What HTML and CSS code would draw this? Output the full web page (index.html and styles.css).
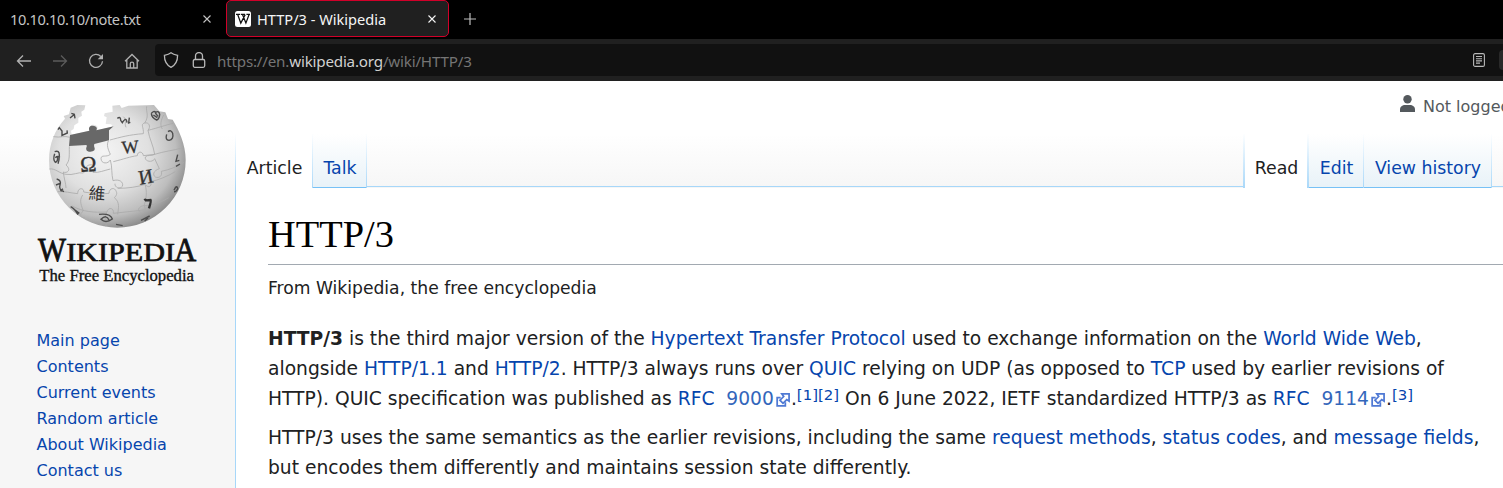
FILE: index.html
```html
<!DOCTYPE html>
<html lang="en">
<head>
<meta charset="utf-8">
<title>HTTP/3 - Wikipedia</title>
<link rel="stylesheet" href="styles.css">
</head>
<body>
<header class="browser">
  <div class="tabstrip">
    <div class="tab"><span class="tab-title narrow">10.10.10.10/note.txt</span>
      <svg class="close" viewBox="0 0 8 8"><path d="M.5.5l7 7M7.5.5l-7 7"/></svg></div>
    <div class="tab tab-active">
      <svg class="favicon" viewBox="0 0 16 16"><rect width="16" height="16" rx="2.5" fill="#fff"/><path d="M1 3.400h4.200M6 3.400h4M11.400 3.400H15M2.700 3.500l3.100 8.600L10.200 3.600M7.500 3.500l3.400 8.600 3.200-8.600" fill="none" stroke="#111" stroke-width="1.250"/></svg>
      <span class="tab-title">HTTP/3 - Wikipedia</span>
      <svg class="close" viewBox="0 0 8 8"><path d="M.5.5l7 7M7.5.5l-7 7"/></svg></div>
    <svg class="plus" viewBox="0 0 12 12"><path d="M6 0v12M0 6h12"/></svg>
  </div>
  <div class="toolbar">
    <div class="nav-icons">
      <svg viewBox="0 0 16 16"><path d="M15 8H1.700M7 2.500L1.500 8 7 13.500"/></svg>
      <svg class="dim" viewBox="0 0 16 16"><path d="M1 8h13.300M9 2.500L14.500 8 9 13.500"/></svg>
      <svg viewBox="0 0 16 16"><path d="M12.800 3.500A6.500 6.500 0 1 0 14.500 8.300"/><path class="solid" d="M15 1v5.300H9.700z"/></svg>
      <svg viewBox="0 0 16 16"><path d="M1 8.300L8 1.500l7 6.800M2.800 7v8h10.400V7M6.300 15v-4.200a1.700 1.700 0 0 1 3.400 0V15"/></svg>
    </div>
    <div class="urlbar">
      <svg class="shield" viewBox="0 0 16 16"><path d="M8 .8c2 1.600 4.300 2.100 6.600 2.500 0 5.500-2 9.800-6.600 12-4.600-2.200-6.600-6.500-6.600-12C3.700 2.900 6 2.400 8 .8z"/></svg>
      <svg class="lock" viewBox="0 0 16 16"><rect x="2.300" y="7.500" width="11.400" height="7.800" rx="1.500"/><path d="M4.500 7.500V4a3.500 3.500 0 0 1 7 0v3.500"/></svg>
      <span class="url">https://en.<b>wikipedia.org</b>/wiki/HTTP/3</span>
      <svg class="reader" viewBox="0 0 12 14"><rect x=".6" y=".6" width="10.800" height="12.800" rx="1.500"/><path d="M3 3.500h6M3 5.700h6M3 7.900h6M3 10.100h4"/></svg>
      <span class="zoom-chip"></span>
    </div>
  </div>
</header>
<div class="page">
  <aside class="sidebar">
    <svg class="logo" viewBox="0 0 540 600">
      <defs>
        <radialGradient id="ball" cx="40%" cy="38%" r="66%"><stop offset="0" stop-color="#f4f4f4"/><stop offset=".5" stop-color="#e0e0e0"/><stop offset=".8" stop-color="#bdbdbd"/><stop offset="1" stop-color="#848484"/></radialGradient>
      </defs>
      <path fill="url(#ball)" d="M122 38l20-8 24 1-3 13-9 6 2 12-11 7 0 14-12 8-2 11-8 5 2 12 55-12c-4-14 4-20 14-17 9 2 11 8 7 15l50-9-8-8-16-1 3-20-8-4 2-8 24-5-1-18 22-2 6 9 20-7 53-1 24-1 16 19 18 3 8 20 14 2C446 104 467 148 467 195a205 203 0 0 1-410 0c0-48 18-92 48-124l-4-8 16-5z"/>
      <path fill="#686868" d="M120 120l58-13c-4-13 5-17 14-14 9 2 10 7 7 13l52-12-14 12v30l-44 11c-3 9 4 12 0 19-5 6-22 6-24-2-2-7 4-10 0-14l-52 3z"/>
      <g class="seams">
        <path d="M70 125c22 4 32-4 50 2M118 154c-1 25 3 42-10 56 18 16 2 26-8 21 2 20 8 36 8 48M58 222c18-3 28 13 50 16 22 4 36-8 52-4 12-10 4-20 17-24 18-4 19 12 12 22 18 2 34-6 52-10M236 136c-8 14-1 28 5 42-12 10-27 0-28 12 0 18 22 17 28 5 6 20 3 42 8 62 18-6 33 4 28 17-7 10-24 3-22-8M240 135c30-8 58-16 100-19 2-20-10-28 4-32 14-3 19 11 10 22 32-8 50-15 75-21M354 106c4 25 16 45 20 72-8 6-22 0-28 8-3 14 22 18 28 5l14 30c-18 6-21 19-12 25 12 5 22-4 18-17 22-4 48-14 68-27M374 178c28-9 58-12 82-19M250 200c32-8 50-15 72-18 0-14 17-14 18 0l34-4M83 290c20-2 38 4 60 6 0-20 20-18 18-5 20 3 50 8 76 4 0-16 18-20 22-5 4 8-3 15-6 18 18 14 12 32 10 50M158 300c-12 18-3 33 2 48-14 10-8 22 4 20M263 280c30 0 60-4 82-12 10 13 22 6 17-8 24-5 50-16 74-30M345 268c7 22 4 44-3 64-18 2-22 18-8 20 14 0 13-14 8-20 28 0 54-12 74-24M126 333c34 18 65 20 105 18 3-15 22-14 19 4l92-10M230 352c-10 20 3 30-3 42M280 65c12 10 2 20 8 32M350 34c-3 16 9 28-6 50M401 60c-8 15-12 30-4 42"/>
      </g>
      <g class="glyphs">
        <text x="150" y="230" font-size="66" transform="rotate(-3 176 205)" stroke="#333">Ω</text>
        <text x="275" y="174" font-size="54" transform="rotate(-5 304 155)" stroke="#333">W</text>
        <text x="325" y="266" font-size="61" transform="rotate(-10 347 245)" stroke="#333">И</text>
        <text class="cjk" x="176" y="314" font-size="50" transform="rotate(4 200 295)">維</text>
        <path stroke-width="7" d="M343 316q4-4 5 0l14-1q2 2-5 25"/>
        <path d="M74 170q14-5 14 10t-4 26M76 188q6-6 14-1M74 176q-6 18 2 26 9-3 6-18M80 252q15 4 10 18t12 20M78 270l12-5M91 288l8-7M84 104l4-6 8 10 0 13 16-7-1-8M124 55l9 3 2 12M120 69l12-10M262 70q10-7 10 6l5 7q12-20 14 0M298 68l-2 16 5-2M364 55q7-9 13-3 10-6 12 6-1 14-9 17-15-7-16-20M370 60l12 8M376 54l8 10M410 118q-5 17 7 18 15-3 11-21-5-12-14-5M443 179l-5 20 10-3M438 214l12-7M432 286q8-19 11-5-4 10-11 9M122 335q13 7 22 24M148 355l-12-9M207 358q34-4 40 14-20 14-34 1 16-16 24 2M333 376l26-13M344 378l10-9M258 388l20 4"/>
      </g>
      <g class="wordmark">
        <text x="24" y="498" font-size="102" stroke-width="2.500" textLength="84" lengthAdjust="spacingAndGlyphs">W</text>
        <text x="109" y="498" font-size="76" stroke-width="2" textLength="326" lengthAdjust="spacingAndGlyphs">IKIPEDI</text>
        <text x="433" y="498" font-size="102" stroke-width="2.500" textLength="66" lengthAdjust="spacingAndGlyphs">A</text>
        <text x="28" y="557" font-size="52" textLength="464" lengthAdjust="spacingAndGlyphs">The Free Encyclopedia</text>
      </g>
    </svg>
    <nav class="links"><a>Main page</a><a>Contents</a><a>Current events</a><a>Random article</a><a>About Wikipedia</a><a>Contact us</a></nav>
  </aside>
  <div class="main">
    <div class="personal"><svg viewBox="0 0 15 18"><circle cx="7.500" cy="4.300" r="4.200"/><path d="M0 17v-2.500C0 11.500 2.500 10 5 10h5c2.500 0 5 1.500 5 4.500V17z"/></svg><span>Not logged</span></div>
    <div class="page-tabs">
      <span class="ptab selected article">Article</span><span class="ptab talk">Talk</span>
      <span class="spacer"></span>
      <span class="ptab selected read">Read</span><span class="ptab edit">Edit</span><span class="ptab history">View history</span><span class="tail"></span>
    </div>
    <main class="content">
      <h1>HTTP/3</h1>
      <div class="siteline">From Wikipedia, the free encyclopedia</div>
      <p><b>HTTP/3</b> is the third major version of the <a>Hypertext Transfer Protocol</a> used to exchange information on the <a>World Wide Web</a>,<br>
      alongside <a>HTTP/1.1</a> and <a>HTTP/2</a>. HTTP/3 always runs over <a>QUIC</a> relying on UDP (as opposed to <a>TCP</a> used by earlier revisions of<br>
      HTTP). QUIC specification was published as <a>RFC</a>&nbsp; <a class="ext">9000<svg viewBox="0 0 12 12"><path d="M4 4H1v7h7V8"/><path d="M5 .8h6.200V7L9.200 5.600 6 8.800 3.400 6.200l3.200-3.200z"/></svg></a>.<sup>[1][2]</sup> On 6 June 2022, IETF standardized HTTP/3 as <a>RFC</a>&nbsp; <a class="ext">9114<svg viewBox="0 0 12 12"><path d="M4 4H1v7h7V8"/><path d="M5 .8h6.200V7L9.200 5.600 6 8.800 3.400 6.200l3.200-3.200z"/></svg></a>.<sup>[3]</sup></p>
      <p>HTTP/3 uses the same semantics as the earlier revisions, including the same <a>request methods</a>, <a>status codes</a>, and <a>message fields</a>,<br>
      but encodes them differently and maintains session state differently.</p>
    </main>
  </div>
</div>
</body>
</html>
```
FILE: styles.css
```css
* { box-sizing: border-box; }
html, body { margin: 0; height: 488px; overflow: hidden; }
body { width: 1503px; font-family: "DejaVu Sans", sans-serif; background: #f6f6f6; color: #202122; }
a { color: #0645ad; }
svg { display: block; flex: none; }

.browser { height: 81px; font-family: "Noto Sans", sans-serif; background: #202020; }
.tabstrip { display: flex; height: 39px; background: #000; color: #c4c4c4; font-size: 14.6px; }
.tab { display: flex; align-items: center; width: 226px; height: 37px; padding: 0 15px 0 10px; }
.tab-title { flex: 1; white-space: nowrap; }
.narrow { letter-spacing: -0.35px; }
.tab-active { width: 223px; padding: 0 12px 0 8px; border: 1px solid #d10029; border-radius: 5px; background: #202020; color: #f5f5f5; }
.favicon { width: 16px; height: 16px; margin-right: 6px; }
.close { width: 8px; height: 8px; fill: none; stroke: currentColor; stroke-width: 1.1; }
.plus { width: 12px; height: 12px; margin: 13px 0 0 15px; fill: none; stroke: #bdbdbd; stroke-width: 1.2; }
.toolbar { display: flex; height: 42px; padding: 5px 0; }
.nav-icons { display: flex; align-items: center; gap: 20px; width: 155px; padding: 1px 0 0 16px; }
.nav-icons svg { width: 16px; height: 16px; fill: none; stroke: #b0b0b0; stroke-width: 1.3; }
.nav-icons .dim { stroke: #5b5b5b; }
.nav-icons .solid { fill: #b0b0b0; stroke: none; }
.urlbar { display: flex; flex: 1; align-items: center; height: 32px; padding-left: 8px; border-radius: 4px 0 0 4px; background: #111; }
.urlbar svg { fill: none; stroke: #b8b8b8; stroke-width: 1.3; }
.shield, .lock { width: 16px; height: 16px; }
.lock { margin: 0 10px 0 12px; }
.url { flex: 1; padding-top: 1px; font-size: 15.2px; letter-spacing: -0.2px; color: #757575; white-space: nowrap; }
.url b { font-weight: 400; color: #d0d0d0; }
.reader { width: 12px; height: 14px; }
.urlbar .reader { stroke-width: 1.1; }
.zoom-chip { width: 4px; height: 20px; margin-left: 14px; border-radius: 4px 0 0 4px; background: #292929; }

.page { display: flex; height: 407px; background: linear-gradient(#fff 53px, #f6f6f6 107px); }
.sidebar { width: 235px; flex: none; padding-top: 14px; }
.logo { width: 180px; height: 200px; margin-left: 30px; }
.seams { fill: none; stroke: #aaa; stroke-width: 2.4; }
.glyphs { fill: #333; font-family: "Liberation Serif", serif; }
.glyphs path { fill: none; stroke: #4c4c4c; stroke-width: 4.2; }
.glyphs path[stroke-width] { stroke: #333; stroke-width: 7; }
.glyphs .cjk { font-family: "Noto Sans CJK TC", sans-serif; }
.wordmark { font-family: "Liberation Serif", serif; fill: #111; stroke: #111; stroke-width: 1; }
.links { display: flex; flex-direction: column; padding: 33px 0 0 36.5px; font-size: 16px; line-height: 26px; }

.main { display: flex; flex: 1; flex-direction: column; min-width: 0; }
.personal { display: flex; flex: none; height: 53px; padding: 14px 0 0 1165px; font-size: 16px; line-height: 23px; color: #54595d; white-space: nowrap; }
.personal svg { width: 15px; height: 18px; margin-right: 8px; fill: #54595d; }
.page-tabs { display: flex; flex: none; height: 54px; font-size: 17.33px; line-height: 20px; white-space: nowrap; }
.ptab { flex: none; height: 54px; padding: 24px 0 0 1px; color: #0645ad; text-align: center; border-right: 1px solid; border-image: linear-gradient(#fff, #a7d7f9) 1; border-bottom-width: 0; background: linear-gradient(#fff, #e8f2f8); box-shadow: inset 0 -1px #77c1f6; }
.selected { color: #202122; background: #fff; box-shadow: none; }
.article { width: 78px; border-left: 1px solid; }
.talk { width: 54px; }
.spacer, .tail { height: 53px; border-bottom: 1px solid #a7d7f9; }
.spacer { flex: 1; }
.read { width: 66px; border-left: 2px solid; border-right-width: 2px; }
.edit { width: 55px; }
.history { width: 128px; }
.tail { width: 11px; }
.content { flex: 1; padding: 22px 0 0 32px; border-left: 1px solid #a7d7f9; background: #fff; }
h1 { height: 55px; margin: 0; border-bottom: 1px solid #a2a9b1; color: #000; font: 400 38.4px/48px "Liberation Serif", serif; }
.siteline { height: 43px; padding-top: 10px; font-size: 17.17px; line-height: 27px; }
p { margin: 9px 0; font-size: 18.683px; line-height: 30px; white-space: nowrap; }
.siteline + p { margin-top: 16px; }
.ext { color: #36b; }
.ext svg { display: inline-block; width: 14px; height: 14px; margin: 0 1px 0 2px; vertical-align: -2px; fill: none; stroke: #4f79d4; stroke-width: 1.5; }
sup { color: #0645ad; font-size: 14.93px; line-height: 1; vertical-align: 5px; }
```
